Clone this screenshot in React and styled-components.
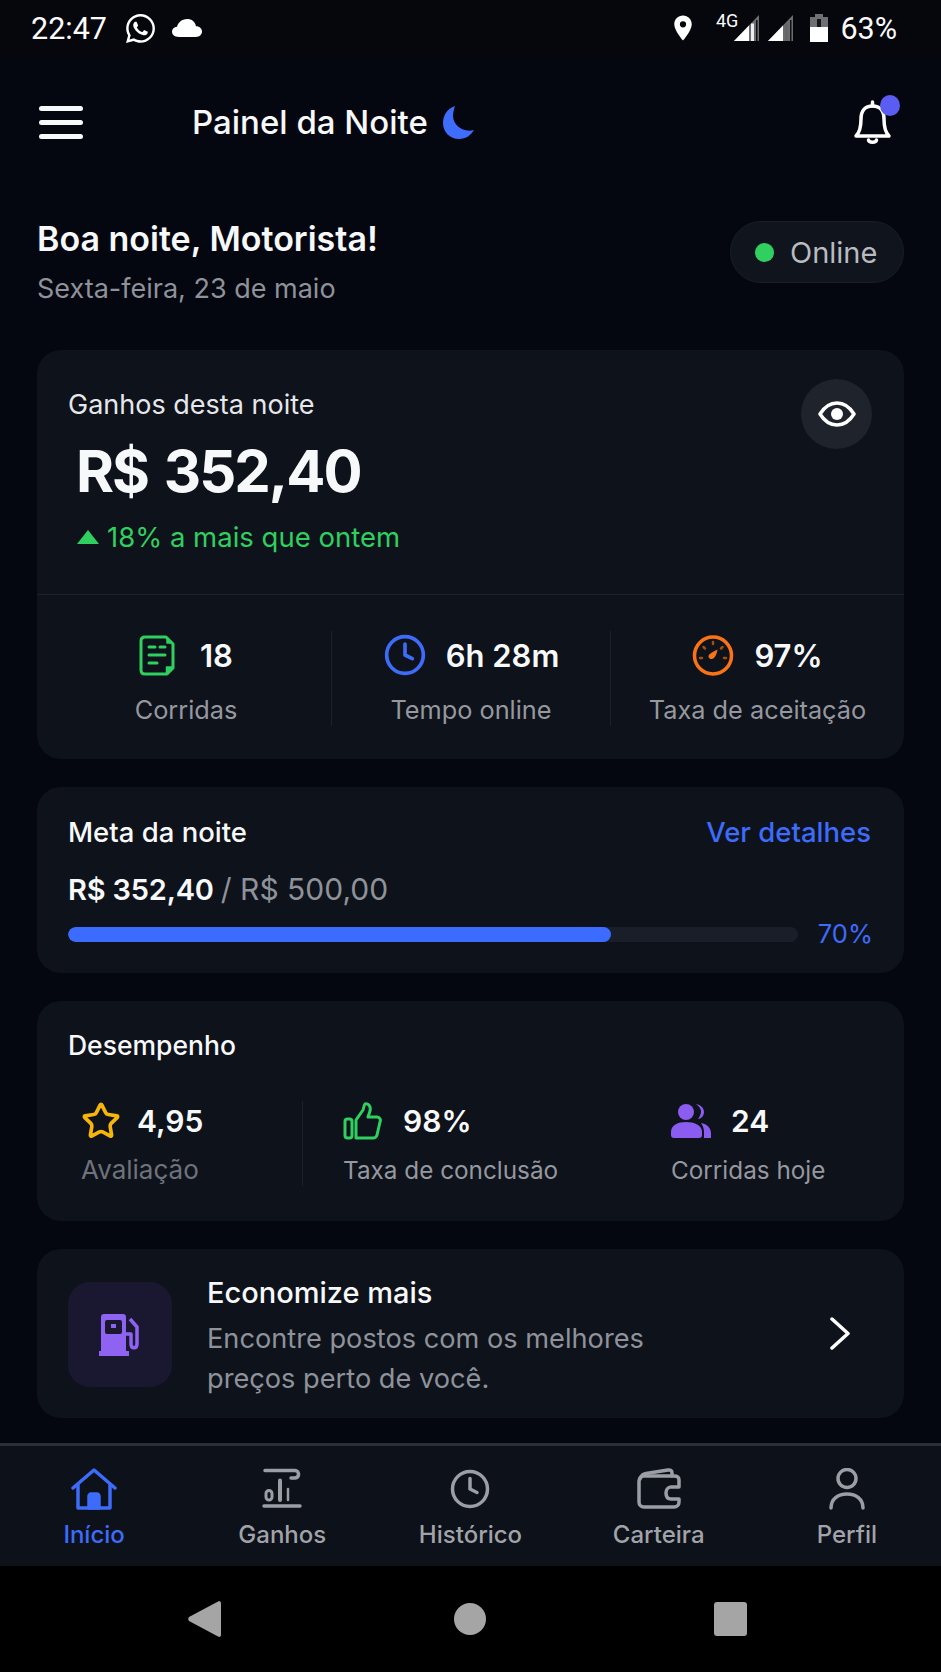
import styled, { createGlobalStyle } from 'styled-components'
import { FaWhatsapp } from 'react-icons/fa'
import { MdLocationOn } from 'react-icons/md'
import { Clock, Star } from 'lucide-react'

const WHITE = '#f7f8fa'
const MUTED = '#8f929a'
const BLUE = '#3d6bfa'
const GREEN = '#2fcf60'
const PURPLE = '#8b5cf0'
const CARD = '#0e121a'
const NAV_ICON = '#9c9ea5'

const GlobalStyle = createGlobalStyle`
  html, body {
    margin: 0;
    padding: 0;
    background: #000;
  }
  * {
    box-sizing: border-box;
  }
`

const Page = styled.div`
  width: 941px;
  height: 1672px;
  display: flex;
  flex-direction: column;
  overflow: hidden;
  background: #04070f;
  color: ${WHITE};
  font-family: Inter, 'Liberation Sans', sans-serif;
`

const StatusBar = styled.div`
  height: 56px;
  flex: none;
  display: flex;
  align-items: center;
  justify-content: space-between;
  padding: 0 44px 0 31px;
  background: #05070c;
  font-family: Roboto, 'Liberation Sans', sans-serif;
  font-size: 30.500px;
  color: #fbfbfb;
`

const StatusGroup = styled.div`
  display: flex;
  align-items: center;
`

const StatusItem = styled.span`
  display: flex;
  align-items: center;
  margin-left: ${(p) => p.$left || 0}px;
`

const NetworkTag = styled.span`
  font-size: 18px;
  line-height: 18px;
  margin: 0 -4px 14px 18px;
`

const Header = styled.header`
  height: 132px;
  flex: none;
  display: flex;
  align-items: center;
  padding: 0 41px 0 39px;
`

const Burger = styled.div`
  width: 44px;
  display: flex;
  flex-direction: column;
  gap: 9px;
  span {
    height: 5px;
    border-radius: 3px;
    background: ${WHITE};
  }
`

const Title = styled.h1`
  margin: 0 0 0 109px;
  font-size: 33px;
  line-height: 40px;
  font-weight: 500;
  flex: 1;
  display: flex;
  align-items: center;
  gap: 15px;
`

const BellWrap = styled.div`
  position: relative;
  width: 47px;
  height: 45px;
  margin-top: 1px;
  svg {
    display: block;
  }
`

const BellDot = styled.span`
  position: absolute;
  top: -5px;
  right: 0;
  width: 20px;
  height: 21px;
  border-radius: 50%;
  background: #5b5cf2;
`

const Main = styled.main`
  flex: 1;
  padding: 0 37px;
  display: flex;
  flex-direction: column;
`

const Greeting = styled.section`
  height: 162px;
  flex: none;
  display: flex;
  justify-content: space-between;
  align-items: flex-start;
`

const GreetingTitle = styled.h2`
  margin: 29px 0 0;
  font-size: 34px;
  line-height: 44px;
  font-weight: 600;
`

const GreetingDate = styled.p`
  margin: 11px 0 0;
  font-size: 27px;
  line-height: 34px;
  color: ${MUTED};
`

const StatusPill = styled.div`
  margin-top: 33px;
  width: 174px;
  height: 62px;
  border-radius: 31px;
  background: #10141c;
  border: 1px solid #191d26;
  display: flex;
  align-items: center;
  padding-left: 24px;
  gap: 16px;
  font-size: 29px;
  color: #b9bbc1;
`

const Dot = styled.span`
  width: 19px;
  height: 19px;
  border-radius: 50%;
  background: ${GREEN};
`

const Card = styled.section`
  flex: none;
  height: ${(p) => p.$height}px;
  margin-bottom: ${(p) => (p.$last ? 0 : 28)}px;
  border-radius: 24px;
  background: ${CARD};
  padding: ${(p) => p.$padding || '0'};
`

const EarningsTop = styled.div`
  height: 245px;
  padding: 29px 32px 0 31px;
  display: flex;
  justify-content: space-between;
  align-items: flex-start;
  border-bottom: 1px solid #1d212b;
`

const EarningsLabel = styled.div`
  margin-top: 10px;
  font-size: 27px;
  line-height: 32px;
  color: #e6e7ea;
`

const Amount = styled.div`
  margin: 15px 0 0 8px;
  font-size: 58px;
  line-height: 70px;
  font-weight: 700;
  letter-spacing: -2px;
  word-spacing: 4px;
`

const Trend = styled.div`
  margin: 13px 0 0 9px;
  display: flex;
  align-items: center;
  gap: 8px;
  font-size: 27.500px;
  line-height: 36px;
  color: ${GREEN};
`

const TrendArrow = styled.span`
  width: 0;
  height: 0;
  border-left: 11px solid transparent;
  border-right: 11px solid transparent;
  border-bottom: 14px solid ${GREEN};
`

const EyeButton = styled.div`
  width: 71px;
  height: 70px;
  border-radius: 50%;
  background: #1f232c;
  display: flex;
  align-items: center;
  justify-content: center;
`

const StatsRow = styled.div`
  display: grid;
  grid-template-columns: 294px 279px 294px;
  padding-top: 36px;
`

const Stat = styled.div`
  height: 95px;
  padding-top: 4px;
  padding-left: ${(p) => (p.$divider ? 0 : 4)}px;
  display: flex;
  flex-direction: column;
  align-items: center;
  border-left: ${(p) => (p.$divider ? '1px solid #1d212b' : 'none')};
`

const StatValue = styled.div`
  height: 40px;
  display: flex;
  align-items: center;
  gap: ${(p) => p.$gap || 20}px;
  font-size: 31px;
  font-weight: 600;
`

const StatLabel = styled.div`
  margin-top: 19px;
  font-size: 25.300px;
  line-height: 32px;
  white-space: nowrap;
  color: ${(p) => p.$color || '#96989f'};
`

const CardHead = styled.div`
  display: flex;
  justify-content: space-between;
  padding-right: 2px;
  font-size: 27.500px;
  line-height: 34px;
  font-weight: 500;
`

const PerformanceHead = styled(CardHead)`
  margin-top: -1px;
  font-size: 26.500px;
`

const DetailsLink = styled.span`
  color: ${BLUE};
`

const GoalAmount = styled.div`
  margin-top: 22px;
  font-size: 29px;
  line-height: 36px;
  font-weight: 600;
  letter-spacing: -0.2px;
  span {
    font-size: 30px;
    font-weight: 400;
    letter-spacing: 0;
    color: ${MUTED};
  }
`

const GoalRow = styled.div`
  margin-top: 10px;
  display: flex;
  align-items: center;
  justify-content: space-between;
  font-size: 25.500px;
  line-height: 32px;
  color: ${BLUE};
`

const Track = styled.div`
  width: 730px;
  height: 15px;
  border-radius: 8px;
  background: #1a1e28;
  overflow: hidden;
`

const Fill = styled.div`
  height: 100%;
  border-radius: 8px;
  background: #3b6cff;
`

const PerformanceRow = styled.div`
  margin-top: 39px;
  display: grid;
  grid-template-columns: 235px 367px 1fr;
`

const PerformanceItem = styled.div`
  height: 85px;
  padding-left: ${(p) => p.$inset}px;
  border-right: ${(p) => (p.$divider ? '1px solid #1d212b' : 'none')};
`

const PerformanceValue = styled(StatValue)`
  justify-content: flex-start;
  font-size: 30px;
`

const PerformanceLabel = styled(StatLabel)`
  margin-top: 13px;
  font-size: ${(p) => p.$size || 24.3}px;
`

const PromoCard = styled(Card)`
  display: flex;
  align-items: center;
`

const PromoTile = styled.div`
  flex: none;
  width: 104px;
  height: 105px;
  margin-top: 2px;
  border-radius: 22px;
  background: #1a1830;
  display: flex;
  align-items: center;
  justify-content: center;
`

const PromoText = styled.div`
  margin-left: 35px;
  padding-top: 4px;
  flex: 1;
  font-size: 27.200px;
  line-height: 40px;
  color: ${MUTED};
  strong {
    display: block;
    margin-bottom: 6px;
    font-size: 29px;
    line-height: 40px;
    font-weight: 500;
    color: ${WHITE};
  }
`

const BottomNav = styled.nav`
  flex: none;
  height: 123px;
  display: grid;
  grid-template-columns: repeat(5, 1fr);
  background: #0d1119;
  border-top: 3px solid #2a2f3a;
`

const NavItem = styled.div`
  display: flex;
  flex-direction: column;
  align-items: center;
  padding-top: 22px;
  font-size: 24px;
  line-height: 32px;
  font-weight: 500;
  color: ${(p) => (p.$active ? BLUE : '#a1a3a9')};
  svg {
    display: block;
    margin-bottom: 9px;
  }
`

const SystemNav = styled.div`
  flex: none;
  height: 106px;
  background: #000;
  display: flex;
  align-items: center;
  padding-left: 188px;
`

const SystemKey = styled.span`
  display: flex;
  margin-left: ${(p) => p.$left || 0}px;
`

function SignalIcon({ faded }) {
  return (
    <svg width="25" height="26" viewBox="0 0 25 26">
      <path d="M0 26 L25 0 V26 Z" fill="#6b6d70" />
      <path d="M0 26 L15 10.500 V26 Z" fill="#fff" />
      <path d="M17 8.500 H20 V26 H17 Z" fill={faded ? '#666' : '#eee'} />
      <path d="M22 5 H23.500 V26 H22 Z" fill="#111" />
    </svg>
  )
}

function BatteryIcon() {
  return (
    <svg width="18" height="28" viewBox="0 0 18 28">
      <path d="M5 0 H13 V3 H18 V28 H0 V3 H5 Z" fill="#6f7073" />
      <path d="M7 5 H11 V13 H7 Z" fill="#16171a" />
      <path d="M0 13 H18 V28 H0 Z" fill="#fff" />
    </svg>
  )
}

function CloudIcon() {
  return (
    <svg width="30" height="18" viewBox="0 0 30 20" preserveAspectRatio="none">
      <path d="M7 20 C2 20 0 17 0 14 C0 11 2 9 5 8.600 C6 4 10 0 15 0 C20 0 23 3 24 8 C28 8 30 11 30 14 C30 18 27 20 24 20 Z" fill="#fff" />
    </svg>
  )
}

function MoonIcon() {
  return (
    <svg width="32" height="33" viewBox="0 0 32 33">
      <path d="M12 0 C4 3 0 9 0 17 C0 26 7 33 16 33 C23 33 28 29 31 24 C20 27 10 19 10 10 C10 6 11 3 12 0 Z" fill="#3f6dfb" />
    </svg>
  )
}

function BellIcon() {
  return (
    <svg width="39" height="45" viewBox="0 0 39 45" fill="none" stroke="#fff" strokeWidth="3.500" strokeLinecap="round" strokeLinejoin="round">
      <path d="M19.500 2 V6" />
      <path d="M3 36 C6 33 8 29 8 19 C8 11 12 6 19.500 6 C27 6 31 11 31 19 C31 29 33 33 36 36 Z" />
      <path d="M15.500 40 C16 43 23 43 23.500 40" />
    </svg>
  )
}

function EyeIcon() {
  return (
    <svg width="38" height="26" viewBox="0 0 38 26" fill="none">
      <path d="M2 13 C7 5 12 2 19 2 C26 2 31 5 36 13 C31 21 26 24 19 24 C12 24 7 21 2 13 Z" stroke="#fff" strokeWidth="3.500" strokeLinejoin="round" />
      <circle cx="19" cy="13" r="6" fill="#fff" />
    </svg>
  )
}

function TripIcon() {
  return (
    <svg width="36" height="41" viewBox="0 0 36 41" fill="none" stroke={GREEN} strokeWidth="3" strokeLinecap="round" strokeLinejoin="round">
      <path d="M6 2 H27 L34 9 V33 L28 39 H6 C3.500 39 2 37.500 2 35 V6 C2 3.500 3.500 2 6 2 Z" />
      <path d="M28 3.500 L32.500 8 H28 Z" fill={GREEN} strokeWidth="1.500" />
      <path d="M10 12 H16 M21 12 H26 M10 20 H26 M10 28 H18" />
      <path d="M27.500 38 V32 H33 Z" fill={GREEN} strokeWidth="1.500" />
    </svg>
  )
}

function GaugeIcon() {
  return (
    <svg width="42" height="41" viewBox="0 0 42 41" fill="none">
      <circle cx="21" cy="20.500" r="18.500" stroke="#f97316" strokeWidth="3.500" />
      <path d="M21 7 V9 M8 23 H10 M32 23 H34 M11.500 12 L13 13.500 M30.500 12 L29 13.500" stroke="#a34d10" strokeWidth="2.500" strokeLinecap="round" />
      <path d="M25.500 14.500 C25 18 24 21 22 23 C20 25 16.500 24 16.500 21.500 C16.500 19 20 17.500 25.500 14.500 Z" fill="#f97316" />
    </svg>
  )
}

function ThumbIcon() {
  return (
    <svg width="40" height="38" viewBox="0 0 40 38" fill="none" stroke={GREEN} strokeWidth="3" strokeLinejoin="round">
      <rect x="2" y="17" width="7" height="19" rx="2.500" />
      <path d="M13 18 L20 8 C21 5 21 3 22 2 C26 1 28 5 27 9 L25 15 H34 C37 15 38 18 37 20 L34 33 C33.500 35 32 36 30 36 H13 Z" />
    </svg>
  )
}

function UsersIcon() {
  return (
    <svg width="40" height="34" viewBox="0 0 40 34" fill={PURPLE}>
      <circle cx="15" cy="8" r="8" />
      <path d="M3 34 C1 34 0 33 0 31 V28 C0 21 7 18 15 18 C23 18 31 21 31 28 V31 C31 33 30 34 28 34 Z" />
      <path d="M25 0 C30 1 33 4 33 8 C33 12 30 15 27 15 C29 12 30 10 30 7.500 C30 5 28 2 25 0 Z" />
      <path d="M30 19 C36 20 40 24 40 29 V34 H33 V28 C33 25 32 22 30 19 Z" />
    </svg>
  )
}

function FuelIcon() {
  return (
    <svg width="42" height="42" viewBox="0 0 42 42">
      <path d="M5 0 H24 C26 0 27 1 27 3 V37 H30 V42 H0 V37 H2 V3 C2 1 3 0 5 0 Z" fill="#8f63f2" />
      <rect x="6" y="6" width="17" height="14" rx="2" fill="#1a1830" />
      <rect x="12" y="10" width="5" height="4" fill="#8f63f2" />
      <path d="M31 5 L38 13 V30 C38 35 32 35 32 30 V20 H27" fill="none" stroke="#8f63f2" strokeWidth="3.500" strokeLinejoin="round" />
    </svg>
  )
}

function ChevronIcon() {
  return (
    <svg width="20" height="33" viewBox="0 0 20 33" fill="none" stroke="#fff" strokeWidth="3.500" strokeLinecap="round" strokeLinejoin="round">
      <path d="M2 2 L18 16.500 L2 31" />
    </svg>
  )
}

function HomeIcon() {
  return (
    <svg width="46" height="42" viewBox="0 0 46 42" fill="none" stroke={BLUE} strokeWidth="3.500" strokeLinejoin="round" strokeLinecap="round">
      <path d="M2 20 L23 2 L44 20" />
      <path d="M7 17 V40 H39 V17" />
      <path d="M18 40 V28 C18 27 19 26 20 26 H26 C27 26 28 27 28 28 V40 Z" fill={BLUE} />
    </svg>
  )
}

function EarningsIcon() {
  return (
    <svg width="40" height="42" viewBox="0 0 40 42" fill="none" stroke={NAV_ICON} strokeWidth="3.500" strokeLinecap="round" strokeLinejoin="round">
      <path d="M3 2.500 H33 C37.500 2.500 38 9.500 33 10 H29" />
      <path d="M2 38 H38" />
      <rect x="4" y="22.500" width="6" height="9.500" rx="3" strokeWidth="3" />
      <path d="M18 12.500 V32" strokeWidth="4" />
      <path d="M26 21 V32" strokeWidth="2.500" />
    </svg>
  )
}

function WalletIcon() {
  return (
    <svg width="44" height="42" viewBox="0 0 44 42" fill="none" stroke={NAV_ICON} strokeWidth="3.500" strokeLinecap="round" strokeLinejoin="round">
      <path d="M42 19 V12 C42 9 40 8 37 8 H7 C4 8 2 10 2 13 V34 C2 37 4 39 7 39 H37 C40 39 42 37 42 34 V31 H34 C30 31 29 28 29 25 C29 22 31 19 34 19 Z" />
      <path d="M3 11 C4 8 6 6 9 5.500 L31 2 C34 1.800 35 3 35 5 V8" />
    </svg>
  )
}

function PersonIcon() {
  return (
    <svg width="38" height="42" viewBox="0 0 38 42" fill="none" stroke={NAV_ICON} strokeWidth="3.500" strokeLinecap="round">
      <circle cx="19" cy="10.500" r="9" />
      <path d="M3 40 C3 31 10 26 19 26 C28 26 35 31 35 40" />
    </svg>
  )
}

export default function App() {
  return (
    <Page>
      <GlobalStyle />
      <StatusBar>
        <StatusGroup>
          <span>22:47</span>
          <StatusItem $left={17}>
            <FaWhatsapp size={33} color="#fff" />
          </StatusItem>
          <StatusItem $left={15}>
            <CloudIcon />
          </StatusItem>
        </StatusGroup>
        <StatusGroup>
          <MdLocationOn size={30} color="#fff" />
          <NetworkTag>4G</NetworkTag>
          <SignalIcon />
          <StatusItem $left={9}>
            <SignalIcon faded />
          </StatusItem>
          <StatusItem $left={17}>
            <BatteryIcon />
          </StatusItem>
          <StatusItem $left={12}>63%</StatusItem>
        </StatusGroup>
      </StatusBar>

      <Header>
        <Burger>
          <span />
          <span />
          <span />
        </Burger>
        <Title>
          Painel da Noite
          <MoonIcon />
        </Title>
        <BellWrap>
          <BellIcon />
          <BellDot />
        </BellWrap>
      </Header>

      <Main>
        <Greeting>
          <div>
            <GreetingTitle>Boa noite, Motorista!</GreetingTitle>
            <GreetingDate>Sexta-feira, 23 de maio</GreetingDate>
          </div>
          <StatusPill>
            <Dot />
            Online
          </StatusPill>
        </Greeting>

        <Card $height={409}>
          <EarningsTop>
            <div>
              <EarningsLabel>Ganhos desta noite</EarningsLabel>
              <Amount>R$ 352,40</Amount>
              <Trend>
                <TrendArrow />
                18% a mais que ontem
              </Trend>
            </div>
            <EyeButton>
              <EyeIcon />
            </EyeButton>
          </EarningsTop>
          <StatsRow>
            <Stat>
              <StatValue $gap={25}>
                <TripIcon />
                18
              </StatValue>
              <StatLabel>Corridas</StatLabel>
            </Stat>
            <Stat $divider>
              <StatValue $gap={19}>
                <Clock size={44} color={BLUE} strokeWidth={2} />
                6h 28m
              </StatValue>
              <StatLabel>Tempo online</StatLabel>
            </Stat>
            <Stat $divider>
              <StatValue>
                <GaugeIcon />
                97%
              </StatValue>
              <StatLabel>Taxa de aceitação</StatLabel>
            </Stat>
          </StatsRow>
        </Card>

        <Card $height={186} $padding="28px 31px 0">
          <CardHead>
            Meta da noite
            <DetailsLink>Ver detalhes</DetailsLink>
          </CardHead>
          <GoalAmount>
            R$ 352,40 <span>/ R$ 500,00</span>
          </GoalAmount>
          <GoalRow>
            <Track>
              <Fill style={{ width: '74.4%' }} />
            </Track>
            70%
          </GoalRow>
        </Card>

        <Card $height={220} $padding="28px 31px 0">
          <PerformanceHead>Desempenho</PerformanceHead>
          <PerformanceRow>
            <PerformanceItem $inset={13} $divider>
              <PerformanceValue $gap={16}>
                <Star size={40} color="#f5b50a" strokeWidth={2.2} />
                4,95
              </PerformanceValue>
              <PerformanceLabel $color="#6f727a" $size={26}>
                Avaliação
              </PerformanceLabel>
            </PerformanceItem>
            <PerformanceItem $inset={40}>
              <PerformanceValue $gap={20}>
                <ThumbIcon />
                98%
              </PerformanceValue>
              <PerformanceLabel>Taxa de conclusão</PerformanceLabel>
            </PerformanceItem>
            <PerformanceItem $inset={1}>
              <PerformanceValue $gap={20}>
                <UsersIcon />
                24
              </PerformanceValue>
              <PerformanceLabel>Corridas hoje</PerformanceLabel>
            </PerformanceItem>
          </PerformanceRow>
        </Card>

        <PromoCard $height={169} $padding="0 54px 0 31px" $last>
          <PromoTile>
            <FuelIcon />
          </PromoTile>
          <PromoText>
            <strong>Economize mais</strong>
            Encontre postos com os melhores
            <br />
            preços perto de você.
          </PromoText>
          <ChevronIcon />
        </PromoCard>
      </Main>

      <BottomNav>
        <NavItem $active>
          <HomeIcon />
          Início
        </NavItem>
        <NavItem>
          <EarningsIcon />
          Ganhos
        </NavItem>
        <NavItem>
          <Clock size={42} color={NAV_ICON} strokeWidth={2} />
          Histórico
        </NavItem>
        <NavItem>
          <WalletIcon />
          Carteira
        </NavItem>
        <NavItem>
          <PersonIcon />
          Perfil
        </NavItem>
      </BottomNav>

      <SystemNav>
        <SystemKey>
          <svg width="33" height="36" viewBox="0 0 33 36">
            <path d="M31 0 C32 0 33 1 33 2 V34 C33 35 32 36 31 36 L1 20 C0 19 0 17 1 16 Z" fill="#a5a5a5" />
          </svg>
        </SystemKey>
        <SystemKey $left={233}>
          <svg width="32" height="32" viewBox="0 0 32 32">
            <circle cx="16" cy="16" r="16" fill="#a5a5a5" />
          </svg>
        </SystemKey>
        <SystemKey $left={228}>
          <svg width="33" height="34" viewBox="0 0 33 34">
            <rect width="33" height="34" rx="3" fill="#a5a5a5" />
          </svg>
        </SystemKey>
      </SystemNav>
    </Page>
  )
}
